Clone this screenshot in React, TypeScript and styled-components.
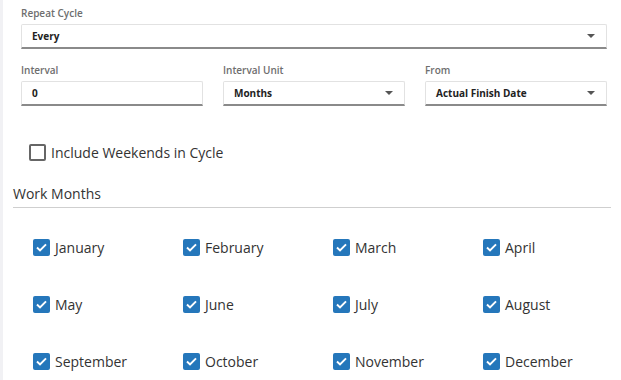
import styled, { createGlobalStyle } from 'styled-components'

const GlobalStyle = createGlobalStyle`
  html, body {
    margin: 0;
    padding: 0;
    background: #ffffff;
    font-family: "Open Sans", "Liberation Sans", sans-serif;
  }
`

const Page = styled.div`
  width: 621px;
  height: 380px;
  box-sizing: border-box;
  border-left: 3px solid #f1f1f4;
  overflow: hidden;
`

const Fields = styled.div`
  padding: 6px 14px 0 18px;
`

const Field = styled.div`
  display: flex;
  flex-direction: column;
`

const Label = styled.label`
  font-size: 10px;
  line-height: 14px;
  font-weight: 600;
  color: #6e6e6e;
  margin-bottom: 4px;
`

const Row = styled.div`
  display: grid;
  grid-template-columns: repeat(3, 1fr);
  column-gap: 20px;
  margin-top: 14px;
`

const Box = styled.div`
  box-sizing: border-box;
  height: 25px;
  display: flex;
  align-items: center;
  justify-content: space-between;
  padding: 0 10px 0 10px;
  border: 1px solid #e2e2e2;
  border-bottom: 2px solid #8a8a8a;
  border-radius: 2px 2px 0 0;
  background: #fff;
  font-size: 10px;
  font-weight: 700;
  color: #222;
`

const Caret = styled.span`
  width: 0;
  height: 0;
  border-left: 4px solid transparent;
  border-right: 4px solid transparent;
  border-top: 4px solid #555;
  margin-right: 1px;
`

const WeekendRow = styled.label`
  display: flex;
  align-items: center;
  gap: 5px;
  margin: 37px 0 0 8px;
  font-size: 14px;
  color: #333;
`

const EmptyBox = styled.span`
  box-sizing: border-box;
  width: 17px;
  height: 17px;
  border: 2px solid #666;
  border-radius: 2px;
`

const Section = styled.div`
  margin: 22px 10px 0 10px;
`

const SectionTitle = styled.div`
  font-size: 14px;
  line-height: 20px;
  color: #333;
  padding-bottom: 3px;
  border-bottom: 1px solid #cfcfcf;
`

const MonthGrid = styled.div`
  display: grid;
  grid-template-columns: repeat(4, 150px);
  grid-auto-rows: 57px;
  padding: 11px 0 0 20px;
`

const Month = styled.label`
  display: flex;
  align-items: center;
  gap: 5px;
  font-size: 14px;
  color: #333;
`

const CheckedBox = styled.span`
  width: 17px;
  height: 17px;
  border-radius: 2px;
  background: #2577bb;
  display: flex;
  align-items: center;
  justify-content: center;
`

const months = [
  'January', 'February', 'March', 'April',
  'May', 'June', 'July', 'August',
  'September', 'October', 'November', 'December',
]

const Check = () => (
  <CheckedBox>
    <svg width="13" height="13" viewBox="0 0 13 13">
      <path d="M2 6.6 L5 9.4 L11 3.4" fill="none" stroke="#fff" strokeWidth="2" />
    </svg>
  </CheckedBox>
)

export default function App() {
  return (
    <Page>
      <GlobalStyle />
      <Fields>
        <Field>
          <Label>Repeat Cycle</Label>
          <Box>
            Every
            <Caret />
          </Box>
        </Field>
        <Row>
          <Field>
            <Label>Interval</Label>
            <Box>0</Box>
          </Field>
          <Field>
            <Label>Interval Unit</Label>
            <Box>
              Months
              <Caret />
            </Box>
          </Field>
          <Field>
            <Label>From</Label>
            <Box>
              Actual Finish Date
              <Caret />
            </Box>
          </Field>
        </Row>
        <WeekendRow>
          <EmptyBox />
          Include Weekends in Cycle
        </WeekendRow>
      </Fields>
      <Section>
        <SectionTitle>Work Months</SectionTitle>
        <MonthGrid>
          {months.map((m) => (
            <Month key={m}>
              <Check />
              {m}
            </Month>
          ))}
        </MonthGrid>
      </Section>
    </Page>
  )
}
